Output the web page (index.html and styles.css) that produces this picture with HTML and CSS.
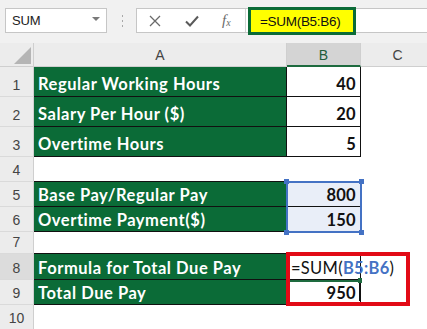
FILE: index.html
```html
<!DOCTYPE html>
<html>
<head>
<meta charset="utf-8">
<link rel="stylesheet" href="styles.css">
</head>
<body>
<div class="app">
  <div class="toolbar">
    <div class="namebox"><span class="nb-text">SUM</span><span class="nb-arrow"></span></div>
    <div class="dots"><i></i><i></i><i></i></div>
    <div class="fbar">
      <div class="fbtns">
        <svg class="ic-x" width="12" height="12" viewBox="0 0 12 12"><path d="M1 1 L11 11 M11 1 L1 11" stroke="#6a6a6a" stroke-width="1.3" fill="none"/></svg>
        <svg class="ic-ok" width="14" height="12" viewBox="0 0 14 12"><path d="M1 6.5 L5 10.5 L13 1.5" stroke="#5a5a5a" stroke-width="2" fill="none"/></svg>
        <span class="fx">f<sub>x</sub></span>
      </div>
      <div class="finput"><div class="fhl">=SUM(B5:B6)</div></div>
    </div>
  </div>
  <div class="sheet">
    <div class="hd corner"></div>
    <div class="hd colh">A</div>
    <div class="hd colh sel">B</div>
    <div class="hd colh">C</div>

    <div class="rh">1</div>
    <div class="c g t1">Regular Working Hours</div>
    <div class="c w num t1">40</div>
    <div class="c"></div>

    <div class="rh">2</div>
    <div class="c g t1">Salary Per Hour ($)</div>
    <div class="c w num t1">20</div>
    <div class="c"></div>

    <div class="rh">3</div>
    <div class="c g t1">Overtime Hours</div>
    <div class="c w num t1">5</div>
    <div class="c"></div>

    <div class="rh">4</div>
    <div class="c above"></div>
    <div class="c above"></div>
    <div class="c"></div>

    <div class="rh">5</div>
    <div class="c g">Base Pay/Regular Pay</div>
    <div class="c w num hl">800</div>
    <div class="c"></div>

    <div class="rh">6</div>
    <div class="c g">Overtime Payment($)</div>
    <div class="c w num hl">150</div>
    <div class="c"></div>

    <div class="rh">7</div>
    <div class="c above"></div>
    <div class="c above"></div>
    <div class="c"></div>

    <div class="rh rsel">8</div>
    <div class="c g">Formula for Total Due Pay</div>
    <div class="c w edit">=SUM(<b class="ref">B5:B6</b>)</div>
    <div class="c"></div>

    <div class="rh">9</div>
    <div class="c g">Total Due Pay</div>
    <div class="c w num">950<span class="caret"></span></div>
    <div class="c"></div>

    <div class="rh">10</div>
    <div class="c"></div>
    <div class="c"></div>
    <div class="c"></div>

    <div class="selbox"><i class="h tl"></i><i class="h tr"></i><i class="h bl"></i><i class="h br"></i></div>
    <div class="activeline"><i></i></div>
    <div class="redbox"></div>
  </div>
</div>
</body>
</html>
```

FILE: styles.css
```css
* { box-sizing: border-box; }
html, body { margin: 0; padding: 0; }
body {
  width: 427px;
  height: 329px;
  overflow: hidden;
  background: #ffffff;
  font-family: "Liberation Sans", Arial, sans-serif;
}
.app { width: 427px; height: 329px; overflow: hidden; }

.toolbar {
  height: 43px;
  background: #f1f1f1;
  display: flex;
  align-items: flex-start;
  padding: 8px 0 0 5px;
}
.namebox {
  width: 102px;
  height: 25px;
  background: #fff;
  border: 1px solid #c6c6c6;
  display: flex;
  align-items: center;
  justify-content: space-between;
  padding: 0 6px 0 6px;
}
.nb-text { font-size: 13px; color: #222; letter-spacing: -0.2px; }
.nb-arrow {
  width: 0; height: 0;
  border-left: 4px solid transparent;
  border-right: 4px solid transparent;
  border-top: 4px solid #7a7a7a;
  margin-top: -3px;
}
.dots {
  width: 3px;
  margin-left: 14px;
  height: 25px;
  display: flex;
  flex-direction: column;
  justify-content: center;
  align-items: center;
  gap: 3px;
}
.dots i { display: block; width: 1px; height: 2px; background: #a8a8a8; }
.fbar {
  flex: 1;
  margin-left: 12px;
  height: 25px;
  background: #fff;
  border: 1px solid #c6c6c6;
  border-right: none;
  display: flex;
}
.fbtns {
  width: 109px;
  flex: none;
  border-right: 1px solid #d4d4d4;
  display: flex;
  align-items: center;
  padding-left: 12px;
}
.ic-ok { margin-left: 24px; }
.fx {
  margin-left: 23px;
  font-family: "Liberation Serif", "Times New Roman", serif;
  font-style: italic;
  font-size: 15px;
  color: #6a6a6a;
  line-height: 1;
}
.fx sub { font-size: 10px; vertical-align: -1px; }
.finput { flex: 1; display: flex; align-items: flex-start; }
.fhl {
  margin-left: 2px;
  margin-top: -2px;
  width: 108px;
  height: 28px;
  border: 3px solid #0b6b37;
  background: #ffff00;
  font-size: 13.5px;
  color: #111;
  display: flex;
  align-items: center;
  padding-left: 9px;
  letter-spacing: -0.3px;
}

.sheet {
  position: relative;
  display: grid;
  grid-template-columns: 34px 253px 74px 74px;
  grid-template-rows: 24px 30px 30px 30px 25px 25px 25px 22px 26px 25px 25px;
  width: 435px;
}
.hd {
  background: #ececec;
  border-right: 1px solid #cfcfcf;
  border-bottom: 1px solid #cfcfcf;
  font-size: 14px;
  color: #444;
  display: flex;
  align-items: center;
  justify-content: center;
}
.corner {
  justify-content: flex-end;
  align-items: flex-end;
  padding: 0 2px 2px 0;
}
.corner::after {
  content: "";
  width: 17px;
  height: 17px;
  background: #b5b5b5;
  clip-path: polygon(100% 0, 100% 100%, 0 100%);
}
.colh { padding-top: 1px; }
.colh.sel {
  background: #d4d4d4;
  color: #215c3a;
  border-bottom: 2px solid #1e6b3f;
}
.rh {
  background: #ececec;
  border-right: 1px solid #cfcfcf;
  border-bottom: 1px solid #dadada;
  font-size: 14px;
  color: #444;
  display: flex;
  align-items: flex-end;
  justify-content: center;
  padding-bottom: 4px;
  line-height: 1;
}
.rh.rsel { background: #dcdcdc; }

.c {
  display: flex;
  align-items: flex-end;
  font-family: Lato, "Liberation Sans", sans-serif;
  font-size: 16.5px;
  line-height: 1;
  padding: 0 4px 3px 4px;
  white-space: nowrap;
  letter-spacing: 0.55px;
}
.g {
  background: #0b6b37;
  color: #fff;
  font-weight: 700;
  border-right: 1px solid #111;
  border-bottom: 1px solid #111;
}
.w {
  background: #fff;
  color: #111;
  font-weight: 700;
  border-right: 1px solid #111;
  border-bottom: 1px solid #111;
}
.t1 { padding-bottom: 4px; }
.above { border-bottom: 1px solid #111; }
.num { justify-content: flex-end; letter-spacing: 0.3px; padding-right: 4px; }
.hl { background: #e9eef8; }
.edit {
  font-weight: 400;
  overflow: visible;
  z-index: 1;
  background: #fff;
  letter-spacing: 0.3px;
}
.ref { color: #4472c4; font-weight: 700; }
.caret {
  display: block;
  width: 1px;
  height: 19px;
  background: #111;
  margin: 0 -4px 0 3px;
}

.selbox {
  position: absolute;
  left: 286px;
  top: 138px;
  width: 76px;
  height: 52px;
  border: 2px solid #4472c4;
  z-index: 2;
}
.selbox .h {
  position: absolute;
  width: 5px;
  height: 5px;
  background: #4472c4;
}
.h.tl { left: -4px; top: -4px; }
.h.tr { right: -4px; top: -4px; }
.h.bl { left: -4px; bottom: -4px; }
.h.br { right: -4px; bottom: -4px; }
.activeline {
  position: absolute;
  left: 287px;
  top: 237px;
  width: 73px;
  height: 2px;
  background: #1e6b3f;
  z-index: 2;
}
.activeline i {
  position: absolute;
  right: -2px;
  top: -2px;
  width: 4px;
  height: 5px;
  background: #1e6b3f;
}
.redbox {
  position: absolute;
  left: 286px;
  top: 209px;
  width: 124px;
  height: 54px;
  border: 4px solid #e20a16;
  z-index: 3;
}
```
